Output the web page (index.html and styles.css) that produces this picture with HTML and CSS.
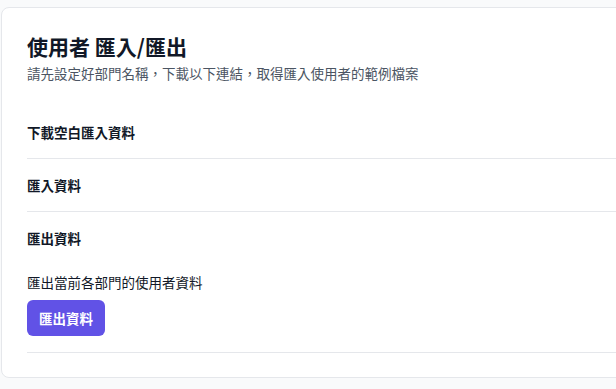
FILE: index.html
```html
<!DOCTYPE html>
<html lang="zh-Hant">
<head>
  <meta charset="UTF-8">
  <title>使用者 匯入/匯出</title>
  <link rel="stylesheet" href="styles.css">
</head>
<body>
  <div class="card">
    <!-- HEADER -->
    <div class="card-header">
      <h1 class="title">使用者 匯入/匯出</h1>
      <p class="subtitle">請先設定好部門名稱，下載以下連結，取得匯入使用者的範例檔案</p>
    </div>

    <!-- SECTIONS -->
    <div class="section">
      <h2 class="section-title">下載空白匯入資料</h2>
    </div>
    <div class="section">
      <h2 class="section-title">匯入資料</h2>
    </div>
    <div class="section">
      <h2 class="section-title">匯出資料</h2>
      <p class="section-desc">匯出當前各部門的使用者資料</p>
      <button class="btn-primary">匯出資料</button>
    </div>
  </div>
</body>
</html>
```

FILE: styles.css
```css
body {
  margin: 0;
  background-color: #f9fafb;
  font-family: "Noto Sans CJK TC", "Noto Sans", sans-serif;
  color: #111827;
  overflow: hidden;
}

.card {
  margin: 7px -24px 0 1px;
  padding: 24px 0 24px 25px;
  background-color: #fff;
  border: 1px solid #e5e7eb;
  border-radius: 8px;
}

.card-header {
  margin-bottom: 23px;
}

.title {
  margin: 0;
  font-size: 21px;
  line-height: 28px;
  font-weight: 700;
}

.subtitle {
  margin: 3px 0 0;
  font-size: 13.5px;
  line-height: 20px;
  color: #4b5563;
}

.section {
  display: flex;
  flex-direction: column;
  align-items: flex-start;
  padding: 16px 0;
  border-bottom: 1px solid #e5e7eb;
}

.section-title {
  margin: 0;
  font-size: 13.5px;
  line-height: 20px;
  font-weight: 700;
}

.section-desc {
  margin: 24px 0 8px;
  font-size: 13.5px;
  line-height: 20px;
}

.btn-primary {
  height: 36px;
  padding: 0 12px;
  font-family: inherit;
  font-size: 13.5px;
  font-weight: 700;
  color: #fff;
  background-color: #6152e6;
  border: none;
  border-radius: 6px;
  cursor: pointer;
}
```
